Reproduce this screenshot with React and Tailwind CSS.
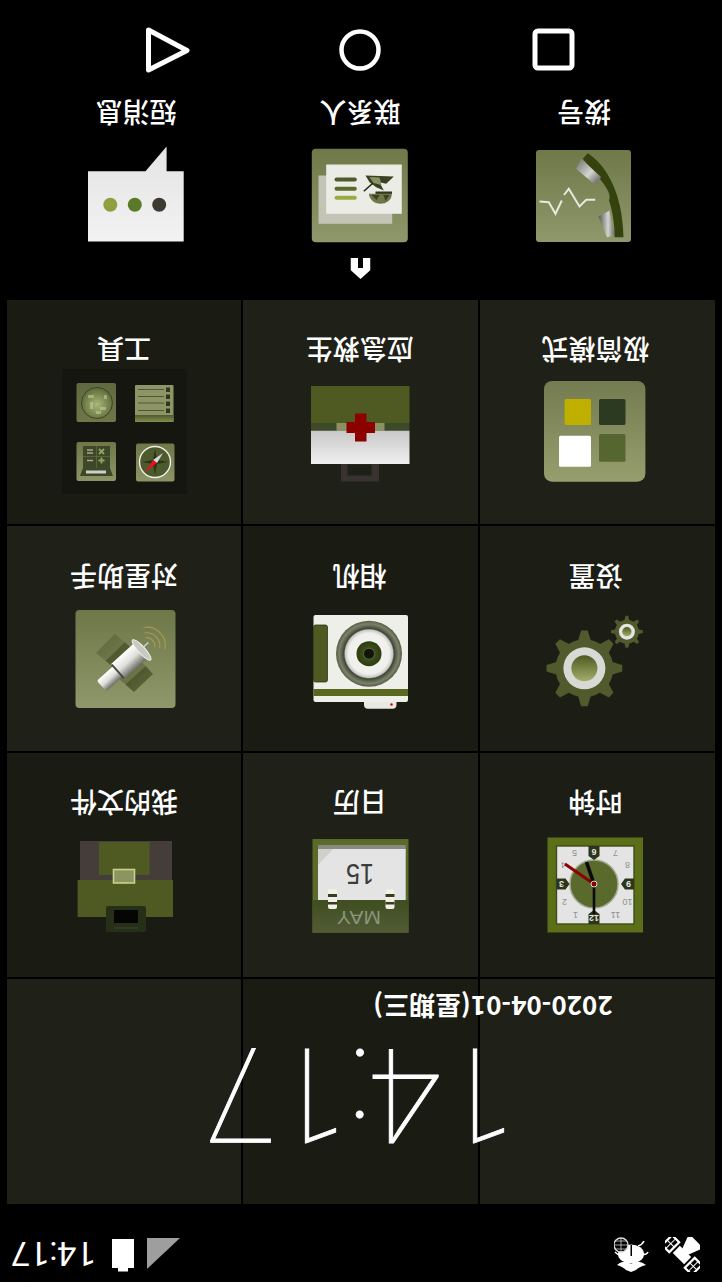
import React from "react";

const CJK = { fontFamily: '"Noto Sans CJK SC", "Noto Sans", sans-serif' };

function Flip({ w = 125, h = 125, children, className = "" }) {
  return (
    <svg width={w} height={h} viewBox={`0 0 ${w} ${h}`} className={`block shrink-0 ${className}`}>
      <g transform={`rotate(180 ${w / 2} ${h / 2})`}>{children}</g>
    </svg>
  );
}

// Text that stays page-upright inside a flipped group
function T({ x, y, size, fill, weight = 400, len, children, family = '"Liberation Sans", sans-serif' }) {
  return (
    <text x={x} y={y} transform={`rotate(180 ${x} ${y})`} textAnchor="middle" dominantBaseline="central" fontSize={size} fill={fill} fontWeight={weight} fontFamily={family} textLength={len} lengthAdjust={len ? "spacingAndGlyphs" : undefined}>
      {children}
    </text>
  );
}

function gear(cx, cy, ro, rr, n) {
  let d = "";
  const step = (Math.PI * 2) / n;
  for (let i = 0; i < n; i++) {
    const a = i * step - Math.PI / 2;
    const pts = [
      [rr, a - step * 0.3],
      [ro, a - step * 0.11],
      [ro, a + step * 0.11],
      [rr, a + step * 0.3],
    ];
    pts.forEach(([r, t], j) => {
      d += `${i === 0 && j === 0 ? "M" : "L"}${(cx + r * Math.cos(t)).toFixed(2)} ${(cy + r * Math.sin(t)).toFixed(2)}`;
    });
  }
  return d + "Z";
}

function Tile({ x, y, w, h, id, from = "#6e7748", to = "#939a6c", r = 3 }) {
  return (
    <>
      <defs>
        <linearGradient id={id} x1="0" y1="0" x2="0" y2="1">
          <stop offset="0" stopColor={from} />
          <stop offset="1" stopColor={to} />
        </linearGradient>
      </defs>
      <rect x={x} y={y} width={w} height={h} rx={r} fill={`url(#${id})`} />
    </>
  );
}

function ToolsIcon() {
  return (
    <Flip>
      <rect width="125" height="125" fill="#14160f" />
      {/* radar */}
      <Tile id="t1" x={14.5} y={14} w={39.5} h={39} from="#5f6840" to="#6f7749" r={2} />
      <defs>
        <radialGradient id="t1c" cx="0.5" cy="0.55" r="0.6">
          <stop offset="0" stopColor="#a9b67c" />
          <stop offset="1" stopColor="#55632f" />
        </radialGradient>
      </defs>
      <circle cx="35" cy="34" r="15.5" fill="url(#t1c)" stroke="#3c4428" strokeWidth="1" />
      <path d="M26 26h6v3h-6zM38 38h6v3h-6zM28 33h3v7h-3zM42 26h3v4h-3zM34 42h5v3h-5z" fill="#c2cd95" opacity="0.6" />
      {/* list */}
      <Tile id="t2" x={73} y={16} w={38.5} h={37} from="#8d9567" to="#8d9567" r={1} />
      <defs>
        <linearGradient id="t2b" x1="0" y1="0" x2="0" y2="1">
          <stop offset="0" stopColor="#4d5a2c" />
          <stop offset="1" stopColor="#83904f" />
        </linearGradient>
      </defs>
      <rect x="73" y="46" width="38.5" height="7" fill="url(#t2b)" />
      <path d="M76 20.5h26M76 27.5h26M76 34h26M76 41.5h26" stroke="#4f5734" strokeWidth="1" />
      <rect x="104" y="18.5" width="4" height="4.5" fill="#2f3620" />
      <rect x="104" y="25.5" width="4" height="4.5" fill="#2f3620" />
      <rect x="104" y="32.5" width="4" height="4.5" fill="#2f3620" />
      <rect x="104" y="39.5" width="4" height="4.5" fill="#2f3620" />
      {/* calc */}
      <Tile id="t3" x={14.5} y={73} w={39.5} h={39} from="#6f7749" to="#8d9567" r={2} />
      <rect x="21" y="77" width="27" height="22" fill="#3d4828" />
      <path d="M18 107l3-8h27l3 8z" fill="#3d4828" />
      <rect x="24" y="101.5" width="20" height="3" fill="#cfd0c8" />
      <path d="M25 81h6M25 84h6M25 91.5h6" stroke="#b0a58f" strokeWidth="1.6" />
      <path d="M37 80l5 5M42 80l-5 5M36.5 91.5h6M39.5 88.5v6" stroke="#94a25e" strokeWidth="1.8" />
      <path d="M34.5 77v22M21 87.5h27" stroke="#6a7450" strokeWidth="0.6" />
      {/* compass */}
      <Tile id="t4" x={74} y={74.5} w={38.5} h={38} from="#6f7749" to="#8d9567" r={2} />
      <circle cx="93" cy="93" r="15.5" fill="#4d5a2e" stroke="#f0f0ea" strokeWidth="1.4" />
      <path d="M93 80l2 11 11 2-11 2-2 11-2-11-11-2 11-2z" fill="#2b3319" />
      <path d="M101 84l-10 7 4 3z" fill="#d9d9d9" />
      <path d="M83 103l8-12 4 3z" fill="#e6141a" />
    </Flip>
  );
}

function AidIcon() {
  return (
    <Flip>
      <rect x="44" y="95" width="38" height="17.5" fill="#3a3230" />
      <rect x="50" y="95" width="25" height="12" fill="#1f2119" stroke="#2e3426" strokeWidth="1" />
      <rect x="14" y="17" width="98.5" height="37" fill="#4f5a22" />
      <rect x="14" y="54" width="98.5" height="7.7" fill="#3c4a28" />
      <rect x="39.5" y="54" width="48" height="7.7" fill="#8a9263" />
      <defs>
        <linearGradient id="a1" x1="0" y1="0" x2="0" y2="1">
          <stop offset="0" stopColor="#c8c8c8" />
          <stop offset="1" stopColor="#f0f0f0" />
        </linearGradient>
      </defs>
      <rect x="14" y="61.7" width="98.5" height="33.3" fill="url(#a1)" />
      <path d="M58 44.5h11.5v8.5h8.5v11h-8.5v8.5H58v-8.5h-8.5v-11H58z" fill="#8c0000" />
    </Flip>
  );
}

function SimpleIcon() {
  return (
    <Flip>
      <Tile id="s1" x={11} y={12} w={101.4} h={100.7} from="#737b50" to="#979e6e" r={8} />
      <rect x="31.6" y="30" width="26.4" height="26" rx="1.5" fill="#bfb000" />
      <rect x="66" y="30" width="26.5" height="26" rx="1.5" fill="#2d3a22" />
      <rect x="26" y="66.7" width="32" height="31" rx="1.5" fill="#ffffff" />
      <rect x="66" y="65" width="26.5" height="27.7" rx="1.5" fill="#566630" />
    </Flip>
  );
}

function SatTileIcon() {
  return (
    <Flip>
      <Tile id="st" x={13.5} y={14} w={100} h={98} from="#6e7748" to="#8f986a" r={4} />
      <defs>
        <linearGradient id="pn" x1="0" y1="0" x2="1" y2="1">
          <stop offset="0" stopColor="#5a6438" />
          <stop offset="0.48" stopColor="#6b7548" />
          <stop offset="0.5" stopColor="#4f5830" />
          <stop offset="1" stopColor="#5f6a3c" />
        </linearGradient>
        <linearGradient id="sb" x1="0" y1="0" x2="0" y2="1">
          <stop offset="0" stopColor="#ffffff" />
          <stop offset="0.5" stopColor="#dededa" />
          <stop offset="1" stopColor="#6d6d66" />
        </linearGradient>
      </defs>
      <path d="M53 38L34 57L56 75L72 54z" fill="url(#pn)" />
      <path d="M78 64L91 78L72 96L56 82z" fill="url(#pn)" />
      <g transform="translate(64 68) rotate(-42)">
        <rect x="-33" y="-7" width="22" height="14" fill="url(#sb)" rx="2" />
        <rect x="-11" y="-10" width="30" height="20" fill="url(#sb)" />
        <rect x="-12" y="-9" width="2" height="18" fill="#4a4a44" />
        <ellipse cx="21" cy="0" rx="3.5" ry="13.5" fill="#c9c9c4" stroke="#f3f3f0" strokeWidth="1" />
        <path d="M24-1h7" stroke="#d8d8d2" strokeWidth="1.4" />
      </g>
      <path d="M83.4 41.8A8 8 0 0 1 92.7 51M82.5 37A13 13 0 0 1 97.6 52M81.6 31.5A18.5 18.5 0 0 1 103 53" fill="none" stroke="#a59a52" strokeWidth="1.2" />
    </Flip>
  );
}

function CameraIcon() {
  return (
    <Flip>
      <rect x="67" y="102" width="32.5" height="10.7" rx="4" fill="#e9e9e3" />
      <circle cx="94.5" cy="108.5" r="1.2" fill="#d80000" />
      <rect x="16.5" y="19" width="94.5" height="87" rx="2" fill="#efefe9" />
      <rect x="16.5" y="93" width="94.5" height="7" fill="#586820" />
      <rect x="16.5" y="29" width="14" height="57" rx="2" fill="#4f5a22" stroke="#2f3818" strokeWidth="0.8" />
      <defs>
        <radialGradient id="c1">
          <stop offset="0" stopColor="#f6f6f2" />
          <stop offset="0.62" stopColor="#efefeb" />
          <stop offset="0.72" stopColor="#c9c9c4" />
          <stop offset="0.76" stopColor="#3f4636" />
          <stop offset="0.9" stopColor="#7a826a" />
          <stop offset="1" stopColor="#555d44" />
        </radialGradient>
        <radialGradient id="c2">
          <stop offset="0" stopColor="#141a08" />
          <stop offset="0.5" stopColor="#3d4d1a" />
          <stop offset="1" stopColor="#2d3b0e" />
        </radialGradient>
      </defs>
      <circle cx="72" cy="57.7" r="33" fill="url(#c1)" />
      <circle cx="72" cy="57.7" r="12.5" fill="url(#c2)" />
      <circle cx="72" cy="57.7" r="5.5" fill="#121408" stroke="#55654a" strokeWidth="1" />
    </Flip>
  );
}

function GearsIcon() {
  return (
    <Flip>
      <path d={gear(51.4, 72.3, 38, 28, 8)} fill="#505a2c" />
      <circle cx="51.4" cy="72.3" r="29" fill="#505a2c" />
      <circle cx="51.4" cy="72.3" r="21" fill="#d8d8d4" />
      <defs>
        <linearGradient id="g1" x1="0" y1="0" x2="0" y2="1">
          <stop offset="0" stopColor="#4d5a20" />
          <stop offset="1" stopColor="#a3ae6c" />
        </linearGradient>
      </defs>
      <circle cx="51.4" cy="72.3" r="13" fill="url(#g1)" />
      <path d={gear(93.9, 35.7, 16, 11, 8)} fill="#505a2c" />
      <circle cx="93.9" cy="35.7" r="12" fill="#505a2c" />
      <circle cx="93.9" cy="35.7" r="8" fill="#e4e4e0" />
      <circle cx="93.9" cy="35.7" r="4.6" fill="url(#g1)" />
    </Flip>
  );
}

function FilesIcon() {
  return (
    <Flip>
      <rect x="18" y="19" width="92" height="39" fill="#453d3a" />
      <rect x="37" y="20" width="50.6" height="33" fill="#4f5a22" />
      <rect x="15.6" y="58" width="95.4" height="37" fill="#4f5a22" />
      <rect x="51.5" y="47.5" width="21" height="13.5" fill="#8c9460" stroke="#c9d08a" strokeWidth="1.6" />
      <rect x="44" y="84" width="40" height="26" rx="2" fill="#263018" />
      <rect x="52" y="88" width="24" height="13" fill="#050505" />
      <path d="M52 106h24" stroke="#3a4526" strokeWidth="1" />
    </Flip>
  );
}

function CalendarIcon() {
  return (
    <Flip>
      <rect x="15.5" y="17" width="96" height="93.7" fill="#5a6a28" />
      <rect x="21" y="23" width="87.7" height="7" fill="#8a8a85" />
      <rect x="21" y="27" width="87.7" height="51" fill="#e4e4e4" />
      <path d="M21 27h15l-15 16z" fill="#cfcfcc" />
      <defs>
        <linearGradient id="k1" x1="0" y1="0" x2="0" y2="1">
          <stop offset="0" stopColor="#3f4d1f" />
          <stop offset="1" stopColor="#525c36" />
        </linearGradient>
      </defs>
      <rect x="15.5" y="78" width="96" height="32.7" fill="url(#k1)" />
      <T x={62} y={95} size={19} fill="#8a947c" len={44}>MAY</T>
      <T x={63} y={52} size={30} fill="#3c3c3c" len={28}>15</T>
      {[31, 88.5].map((x) => (
        <g key={x}>
          <rect x={x} y="67" width="9" height="20" rx="2" fill="#f0f0e4" />
          <rect x={x} y="72" width="9" height="3" fill="#3a3a26" />
          <rect x={x} y="80" width="9" height="2.5" fill="#3a3a26" />
        </g>
      ))}
    </Flip>
  );
}

function ClockIcon() {
  const f = '"Liberation Sans", sans-serif';
  return (
    <Flip>
      <g transform="translate(1.5 0)">
        <rect x="13" y="15.5" width="95.5" height="95" fill="#5b6f18" />
        <rect x="22" y="24" width="77.5" height="78" fill="#e4e4e4" stroke="#3f4d1c" strokeWidth="1.4" />
        <circle cx="59.5" cy="62" r="24" fill="#596a2c" stroke="#a0a890" strokeWidth="1.5" />
        <path d="M54 24h11v10l-5.5 4-5.5-4z" fill="#2b3519" />
        <path d="M54 102V92l5.5-4 5.5 4v10z" fill="#2b3519" />
        <path d="M22 56.5h9l4 5.5-4 5.5h-9z" fill="#2b3519" />
        <path d="M99.5 56.5h-9l-4 5.5 4 5.5h9z" fill="#2b3519" />
        <T x={59.5} y={30} size={9} fill="#e4e4e4" weight={700} family={f}>6</T>
        <T x={59.5} y={96} size={9} fill="#e4e4e4" weight={700} family={f}>12</T>
        <T x={27} y={62} size={9} fill="#e4e4e4" weight={700} family={f}>3</T>
        <T x={94} y={62} size={9} fill="#e4e4e4" weight={700} family={f}>9</T>
        {[["5", 40, 31], ["7", 81, 31], ["4", 29, 43], ["8", 93, 43], ["2", 30, 80], ["10", 93, 80], ["1", 41, 93], ["11", 81, 93]].map(([n, x, y]) => (
          <T key={n} x={x} y={y} size={9} fill="#8f8f8f" family={f}>{n}</T>
        ))}
        <path d="M59.5 62L30.5 42" stroke="#8c0000" strokeWidth="3" />
        <path d="M59.5 62L52 40" stroke="#0b0b0b" strokeWidth="3.6" />
        <path d="M59.5 62V92" stroke="#0b0b0b" strokeWidth="2.6" />
        <circle cx="59.5" cy="62" r="3" fill="#8c0000" stroke="#d8d8d0" strokeWidth="1" />
      </g>
    </Flip>
  );
}

function SmsIcon() {
  return (
    <Flip>
      <defs>
        <linearGradient id="m1" x1="0" y1="0" x2="0" y2="1">
          <stop offset="0" stopColor="#e4e4e4" />
          <stop offset="1" stopColor="#f2f2f2" />
        </linearGradient>
      </defs>
      <path d="M15 38.2H72.5L93.6 13.5V38.2H110.7V108.5H15z" fill="url(#m1)" />
      <circle cx="37.3" cy="71.8" r="7" fill="#8fa040" />
      <circle cx="61.8" cy="71.8" r="7" fill="#5a7a2a" />
      <circle cx="86.2" cy="71.8" r="7" fill="#3d3a32" />
    </Flip>
  );
}

function ContactsIcon() {
  return (
    <Flip>
      <Tile id="p1" x={14.8} y={15.8} w={96} h={93.4} from="#6f7849" to="#8f986a" r={4} />
      <rect x="21.5" y="42.5" width="73.7" height="48.3" fill="#c3c4b6" />
      <rect x="29.2" y="31.5" width="75.6" height="49.3" fill="#ecece6" />
      <rect x="37.500" y="44.5" width="22.3" height="4" rx="2" fill="#4f5a2a" />
      <rect x="37.500" y="53.8" width="22.3" height="4" rx="2" fill="#5a6a2a" />
      <rect x="37.500" y="62.8" width="22.3" height="4" rx="2" fill="#9aaa40" />
      <path d="M68.500 42.5L96.8 43.5L89.2 50.8L82.500 49.2L86.8 57.5L79.2 54.2L72.500 49.2z" fill="#3a4224" />
      <path d="M72.500 44L82.500 44.5L84.500 52L76.500 50z" fill="#8b9164" />
      <path d="M66.8 58.2L75.8 50.2" stroke="#1d2212" strokeWidth="1.5" />
      <path d="M78.500 58.5H95V61H78.500z" fill="#2f3a1a" />
      <path d="M71.8 60.8H94.8C94.8 67.5 89.2 70.8 83.500 70.8C77.500 70.8 72.500 66.8 71.8 60.8z" fill="#6f7749" />
      <path d="M74.500 62h8l-3 5zM86.500 62h6l-4 6z" fill="#3a4224" />
    </Flip>
  );
}

function PhoneIcon() {
  return (
    <Flip>
      <Tile id="h1" x={15} y={17} w={95} h={92} from="#6f7849" to="#8f986a" r={3} />
      <path d="M66.8 20.2C83.5 30.8 101.8 57.5 102.5 104.2H93.5C94 90.8 90.5 74.2 88 67.5C90.2 62.5 86.8 55.8 80.2 47.5L61.8 25.8z" fill="#34420e" />
      <defs>
        <linearGradient id="h2" x1="0" y1="0" x2="1" y2="1">
          <stop offset="0" stopColor="#6d6d68" />
          <stop offset="0.55" stopColor="#d4d4d0" />
          <stop offset="1" stopColor="#4d4d48" />
        </linearGradient>
        <linearGradient id="h3" x1="0" y1="0" x2="1" y2="0">
          <stop offset="0" stopColor="#55554f" />
          <stop offset="0.6" stopColor="#d4d4d0" />
          <stop offset="1" stopColor="#6a6a64" />
        </linearGradient>
      </defs>
      <path d="M60.2 25.8L80.2 44.2L73.5 51.5L55.2 35.8z" fill="url(#h2)" />
      <path d="M77.5 83.5L88.5 77.5L93.5 102.5L85.8 104.2z" fill="url(#h3)" />
      <path d="M18.5 68.5L27.8 69.2L34.5 80.8L40.8 67.5M43 62L47.8 55.8L58.5 73.5L65.2 66.8L74.2 66.8" fill="none" stroke="#e8e8e0" strokeWidth="2" />
    </Flip>
  );
}

const cellA = "bg-[#1f2119]";
const cellB = "bg-[#1a1c14]";

function Cell({ label, Icon, bg, shift = "" }) {
  return (
    <div className={`flex h-[224.5px] flex-col items-center pt-[30px] ${bg} ${shift}`}>
      <Icon />
      <div className="mt-[7px] h-[24px] text-[27px] font-medium leading-[24px] text-white" style={CJK}>
        {label}
      </div>
    </div>
  );
}

function Cell2({ label, Icon }) {
  return (
    <div className="flex flex-col items-center">
      <Icon />
      <div className="mt-[8px] h-[24px] text-[27px] font-medium leading-[24px] text-white" style={CJK}>
        {label}
      </div>
    </div>
  );
}

function Status() {
  return (
    <div className="flex h-[76px] items-start justify-between pl-[20px] pr-[11px] pt-[8px]">
      <div className="flex gap-[16px]">
        <Flip w={35} h={35}>
          <g transform="translate(17 18) rotate(-45)">
            <path d="M-5-8h10v16H-5z" fill="#fff" />
            <rect x="-7" y="-21" width="14" height="10" fill="#000" stroke="#fff" strokeWidth="2.2" />
            <path d="M0-21v10M-7-16h14" stroke="#fff" strokeWidth="1" />
            <rect x="-7" y="11" width="14" height="10" fill="#000" stroke="#fff" strokeWidth="2.2" />
            <path d="M0 11v10M-7 16h14" stroke="#fff" strokeWidth="1" />
            <path d="M4-4L20-10V10L4 4z" fill="#fff" />
          </g>
        </Flip>
        <Flip w={35} h={35}>
          <ellipse cx="17" cy="17" rx="13" ry="9.500" fill="#fff" />
          <path d="M16.500 8h1.500v11h-1.500z" fill="#000" />
          <path d="M3 28C8 24 12 24 17 27C22 24 26 24 32 28C27 29 24 31 22 33L17 35L12 33C10 31 7 29 3 28z" fill="#fff" />
          <path d="M24 9C28 8 29 6 30 4M29 17C31 18 33 17 34 15M5 18C3 17 2 16 1 15" stroke="#fff" strokeWidth="1.6" fill="none" />
          <circle cx="7" cy="8" r="7" fill="#000" stroke="#ddd" strokeWidth="1.4" />
          <path d="M0 8h14M7 1v14M2 4h10M2 12h10" stroke="#ccc" strokeWidth="0.8" />
        </Flip>
      </div>
      <div className="flex items-start">
        <Flip w={33} h={31} className="mt-[3px]">
          <path d="M0 31L33 0H0z" fill="#9e9e9e" />
        </Flip>
        <Flip w={22} h={33} className="ml-[13px]">
          <path d="M0 0h22v29H16v3.500H6V29H0z" fill="#fff" />
        </Flip>
        <div className="ml-[16px] mt-[2px] text-[34px] font-normal leading-[33px] text-white" style={{ fontFamily: "Roboto, sans-serif" }}>
          14:17
        </div>
      </div>
    </div>
  );
}

export default function App() {
  return (
    <div className="h-[1282px] w-[722px] overflow-hidden bg-black">
      <div className="h-[1280px] w-[720px] rotate-180 bg-black">
        <Status />
        <div className="relative ml-[5.3px] grid w-[708px] grid-cols-3 gap-[2px]">
          <div className={`h-[224.5px] ${cellA}`} />
          <div className={`h-[224.5px] ${cellB}`} />
          <div className={`h-[224.5px] ${cellA}`} />
          <Cell label="时钟" Icon={ClockIcon} bg="bg-[#1c1e16]" shift="pl-[4px]" />
          <Cell label="日历" Icon={CalendarIcon} bg={cellA} shift="pl-[2px]" />
          <Cell label="我的文件" Icon={FilesIcon} bg={cellB} />
          <Cell label="设置" Icon={GearsIcon} bg="bg-[#1c1e16]" shift="pl-[4px]" />
          <Cell label="相机" Icon={CameraIcon} bg={cellB} shift="pl-[2px]" />
          <Cell label="对星助手" Icon={SatTileIcon} bg={cellA} />
          <Cell label="极简模式" Icon={SimpleIcon} bg={cellA} shift="pl-[4px]" />
          <Cell label="应急救生" Icon={AidIcon} bg={cellA} shift="pl-[2px]" />
          <Cell label="工具" Icon={ToolsIcon} bg={cellB} />

          <div className="absolute left-[199px] top-[63px] text-[132px] font-thin leading-[94px] text-white [-webkit-text-stroke:0.8px_white]" style={{ fontFamily: "Roboto, sans-serif" }}>
            14:17
          </div>
          <div className="absolute left-[102px] top-[184px] text-[26px] font-bold leading-[25px] text-white" style={CJK}>
            2020-04-01(星期三)
          </div>
        </div>

        <div className="mt-[21px] flex justify-center">
          <Flip w={20} h={21} className="-translate-x-[0.5px]">
            <path d="M0 0h7.500v10h5V0H20v12L10 21 0 12z" fill="#fff" />
          </Flip>
        </div>
        <div className="ml-[24px] grid w-[672px] grid-cols-3">
          <Cell2 label="拨号" Icon={PhoneIcon} />
          <Cell2 label="联系人" Icon={ContactsIcon} />
          <Cell2 label="短消息" Icon={SmsIcon} />
        </div>
        <div className="mx-auto mt-[20.5px] grid w-[582px] grid-cols-3 justify-items-center">
          <Flip w={60} h={60}>
            <rect x="11" y="11" width="37" height="37" rx="3" fill="none" stroke="#fff" strokeWidth="5" />
          </Flip>
          <Flip w={60} h={60}>
            <circle cx="30" cy="30" r="18.500" fill="none" stroke="#fff" strokeWidth="4.5" />
          </Flip>
          <Flip w={60} h={60}>
            <path d="M12.500 10L51 30.500 12.500 50z" fill="none" stroke="#fff" strokeWidth="5" strokeLinejoin="round" />
          </Flip>
        </div>
      </div>
    </div>
  );
}
